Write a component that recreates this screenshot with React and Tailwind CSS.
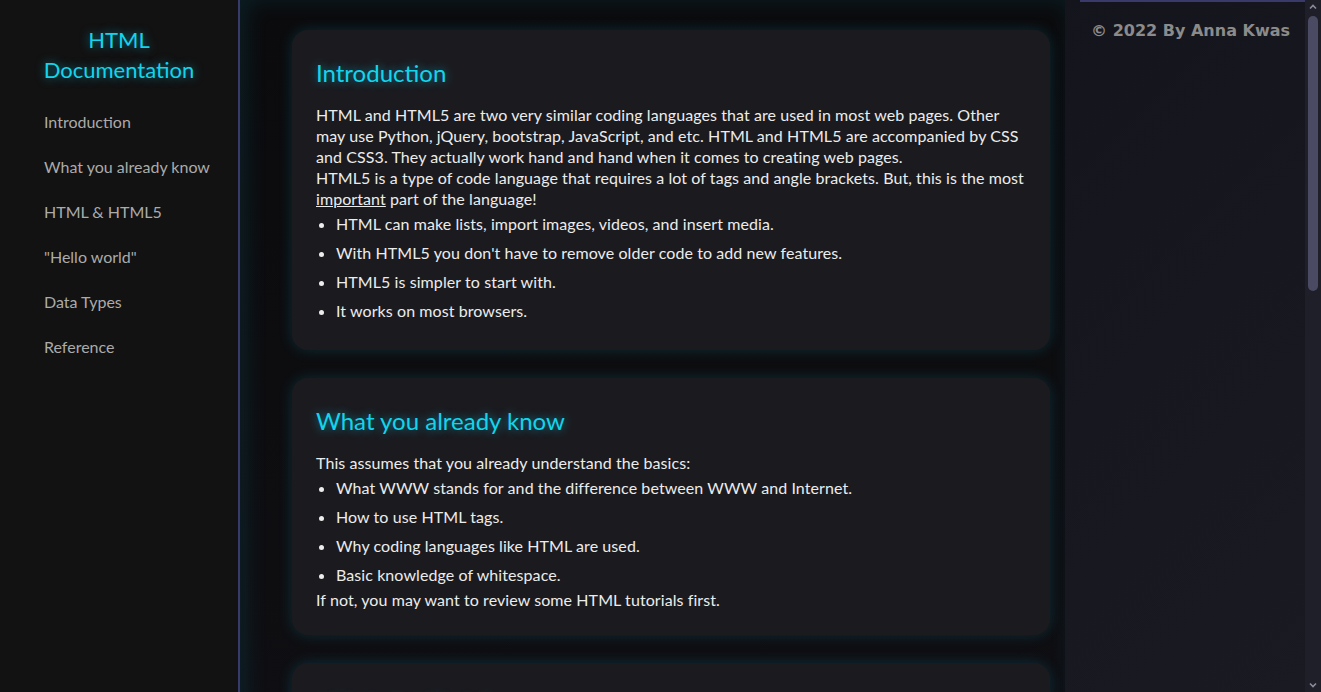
import React from 'react';

const nav = ['Introduction', 'What you already know', 'HTML & HTML5', '"Hello world"', 'Data Types', 'Reference'];

function Section({ title, children }) {
    return (
        <section className="mb-7 rounded-2xl bg-[#1b1b1f] px-6 pt-[27px] pb-[25px] shadow-[0_0_14px_rgba(0,190,230,0.18)]">
            <h2 className="mb-[15px] text-2xl leading-8 text-[#14d4ec] [text-shadow:0_0_10px_rgba(0,215,255,0.55)]">{title}</h2>
            <div className="text-base leading-[21px] tracking-[0.08px] text-[#ececec]">{children}</div>
        </section>
    );
}

function List({ items }) {
    return (
        <ul className="list-disc pl-5">
            {items.map((it) => (
                <li key={it} className="py-1">{it}</li>
            ))}
        </ul>
    );
}

// fake window scrollbar, the screenshot shows the dark one
function Scrollbar() {
    return (
        <div className="flex h-[692px] w-4 shrink-0 flex-col items-center bg-[#1f1f29]">
            <svg className="mt-[3px] h-2 w-2" viewBox="0 0 8 8" fill="none" stroke="#8a8a9a" strokeWidth="1.6">
                <path d="M1 5.5 4 2.5 7 5.5" />
            </svg>
            <div className="mt-[5px] h-[275px] w-[10px] rounded-full bg-[#4a4a63]" />
            <div className="flex-1" />
            <svg className="mb-[3px] h-2 w-2" viewBox="0 0 8 8" fill="none" stroke="#8a8a9a" strokeWidth="1.6">
                <path d="M1 2.5 4 5.5 7 2.5" />
            </svg>
        </div>
    );
}

export default function App() {
    return (
        <div className="flex h-[692px] overflow-hidden bg-[linear-gradient(135deg,#111117_0%,#14151c_50%,#191a22_100%)] font-['Lato','Liberation_Sans',sans-serif]">
            <nav className="h-[692px] w-[240px] shrink-0 border-r-2 border-[#39396a] bg-[#121212]">
                <h1 className="pt-[25px] text-center text-[22px] leading-[30px] text-[#14d4ec] [text-shadow:0_0_10px_rgba(0,215,255,0.55)]">
                    HTML<br />Documentation
                </h1>
                <ul className="mt-[14px] pl-11 text-base text-[#ababab]">
                    {nav.map((n) => (
                        <li key={n} className="py-[12px] leading-[21px]">{n}</li>
                    ))}
                </ul>
            </nav>

            <main className="w-[825px] shrink-0 self-start bg-[linear-gradient(180deg,#0b0b0d_0%,#101014_100%)] pl-[52px] pr-[15px] pt-[30px] pb-2 shadow-[inset_6px_0_22px_rgba(0,170,210,0.12)]">
                <Section title="Introduction">
                    <p>
                        HTML and HTML5 are two very similar coding languages that are used in most web pages. Other may use Python, jQuery, bootstrap, JavaScript, and etc. HTML and HTML5 are accompanied by CSS and CSS3. They actually work hand and hand when it comes to creating web pages.
                    </p>
                    <p>
                        HTML5 is a type of code language that requires a lot of tags and angle brackets. But, this is the most <u>important</u> part of the language!
                    </p>
                    <List
                        items={[
                            'HTML can make lists, import images, videos, and insert media.',
                            "With HTML5 you don't have to remove older code to add new features.",
                            'HTML5 is simpler to start with.',
                            'It works on most browsers.',
                        ]}
                    />
                </Section>

                <Section title="What you already know">
                    <p>This assumes that you already understand the basics:</p>
                    <List
                        items={[
                            'What WWW stands for and the difference between WWW and Internet.',
                            'How to use HTML tags.',
                            'Why coding languages like HTML are used.',
                            'Basic knowledge of whitespace.',
                        ]}
                    />
                    <p>If not, you may want to review some HTML tutorials first.</p>
                </Section>

                <Section title="HTML & HTML5">
                    <p>
                        HTML stands for HyperText Markup Language. HTML5 is the newest version of it and adds new elements, attributes and behaviors to the language.
                    </p>
                    <List
                        items={[
                            'HTML5 supports audio and video without plugins.',
                            'HTML5 adds semantic tags like header, footer, nav and article.',
                            'HTML5 brings local storage and canvas drawing.',
                        ]}
                    />
                </Section>
            </main>

            <aside className="ml-[15px] h-[692px] min-w-0 flex-1 border-t-2 border-[#39396a]">
                <p className="pt-[17px] pr-[15px] text-right font-['DejaVu_Sans',sans-serif] text-base font-bold text-[#8b8b8b]">
                    © 2022 By Anna Kwas
                </p>
            </aside>

            <Scrollbar />
        </div>
    );
}
